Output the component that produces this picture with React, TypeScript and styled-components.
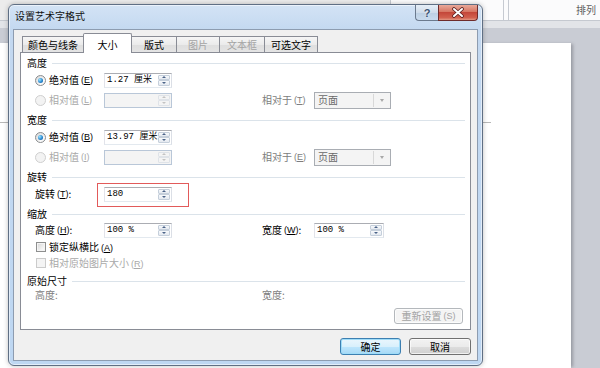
import React from "react";
import styled, { createGlobalStyle, css } from "styled-components";

const GlobalStyle = createGlobalStyle`
  html, body { margin: 0; padding: 0; }
  body {
    width: 600px; height: 368px; overflow: hidden;
    font-family: "Noto Sans CJK SC", "Liberation Sans", sans-serif;
    font-size: 10px; line-height: 14px; color: #000;
    background: #c9ccd4;
  }
  * { box-sizing: border-box; }
`;

const Screen = styled.div`
  position: relative;
  width: 600px;
  height: 368px;
  display: flex;
  flex-direction: column;
  overflow: hidden;
`;

const Ribbon = styled.div`
  height: 21px;
  flex: none;
  display: flex;
  background: #fbfbfc;
  border-bottom: 1px solid #c5c9d0;
`;

const RibbonGroup = styled.div<{ $w?: number; $tone?: string }>`
  ${(p) => (p.$w ? css`width: ${p.$w}px; flex: none;` : css`flex: 1;`)}
  background: ${(p) => p.$tone ?? "transparent"};
  border-right: 1px solid #c6cad1;
  display: flex;
  align-items: center;
  justify-content: flex-end;
  padding-right: 4px;
  color: #5f5f5f;
  &:last-child { border-right: none; }
`;

const Band = styled.div`
  height: 7px;
  flex: none;
  background: #e2e4e8;
`;

const Workspace = styled.div`
  flex: 1;
  padding-top: 15px;
  background: #c9ccd4;
  display: flex;
`;

const Page = styled.div`
  width: 571px;
  height: 100%;
  background: #fff;
  box-shadow: 3px 0 3px -1px rgba(60, 60, 70, 0.35);
`;

const MarginGuide = styled.div`
  margin-top: 79px;
  width: 491px;
  height: 1px;
  background: #b8b8b8;
`;

/* ---------- dialog window ---------- */

const Dialog = styled.div`
  position: absolute;
  left: 8px;
  top: 4px;
  width: 475px;
  height: 362px;
  border: 1px solid #5f6f84;
  border-radius: 6px;
  background: linear-gradient(#d3e3f5, #c3d8f0 26px, #bed7f2);
  box-shadow: inset 0 0 0 1px rgba(255, 255, 255, 0.55), 0 0 5px rgba(0, 0, 0, 0.25);
  padding: 0 4px 4px 4px;
  display: flex;
  flex-direction: column;
`;

const TitleBar = styled.div`
  height: 24px;
  flex: none;
  display: flex;
  align-items: flex-start;
  padding-left: 2px;
`;

const TitleText = styled.div`
  padding-top: 4px;
  color: #111;
`;

const CaptionButtons = styled.div`
  margin-left: auto;
  display: flex;
  height: 16px;
`;

const CaptionButton = styled.div<{ $kind: "help" | "close" }>`
  height: 16px;
  display: flex;
  align-items: center;
  justify-content: center;
  border: 1px solid #6b7a8e;
  border-top: none;
  ${(p) =>
    p.$kind === "help"
      ? css`
          width: 23px;
          border-right: none;
          border-radius: 0 0 0 4px;
          background: linear-gradient(#e6eef7, #cfdcea 50%, #bccfe3 51%, #c9dbee);
          color: #3b5472;
          font-family: "Liberation Sans", sans-serif;
          font-weight: bold;
          font-size: 11px;
          text-shadow: 0 0 2px #fff;
        `
      : css`
          width: 40px;
          border-color: #6e2b2b;
          border-radius: 0 0 4px 0;
          background: linear-gradient(#e9a99a, #d67663 45%, #c4473a 50%, #d2614f 85%, #e39a86);
        `}
`;

const Content = styled.div`
  flex: 1;
  display: flex;
  flex-direction: column;
  background: #f0f0f0;
  border: 1px solid #8d9cb0;
  padding: 3px 6px 0 6px;
`;

const TabStrip = styled.div`
  height: 20px;
  flex: none;
  display: flex;
  align-items: flex-end;
  padding-left: 2px;
  margin-bottom: -1px;
  position: relative;
  z-index: 1;
`;

const Tab = styled.div<{ $w: number; $active?: boolean; $disabled?: boolean }>`
  width: ${(p) => p.$w}px;
  margin-right: -1px;
  border: 1px solid #898c95;
  border-bottom: none;
  display: flex;
  justify-content: center;
  color: ${(p) => (p.$disabled ? "#a3a3a3" : "#000")};
  ${(p) =>
    p.$active
      ? css`
          height: 20px;
          padding-top: 4px;
          background: #fff;
          position: relative;
          z-index: 2;
          border-radius: 2px 2px 0 0;
        `
      : css`
          height: 16px;
          margin-bottom: 1px;
          padding-top: 1px;
          background: linear-gradient(#f6f6f6, #ebebeb 50%, #dedede 51%, #e4e4e4);
        `}
`;

const Panel = styled.div`
  height: 278px;
  flex: none;
  background: #fff;
  border: 1px solid #898c95;
  padding: 0 5px 0 6px;
  display: flex;
  flex-direction: column;
`;

const Section = styled.div`
  padding-top: 3px;
  display: flex;
  flex-direction: column;
`;

const SectionHead = styled.div`
  height: 14px;
  display: flex;
  align-items: center;
  gap: 5px;
  &::after {
    content: "";
    flex: 1;
    height: 1px;
    background: #dbe3ea;
  }
`;

const Row = styled.div<{ $h: number }>`
  height: ${(p) => p.$h}px;
  padding-left: 8px;
  display: grid;
  grid-template-columns: 69px 68px 90px 52px auto;
  align-items: center;
`;

const Cell = styled.div<{ $tone?: "normal" | "disabled" | "muted"; $col?: number }>`
  display: flex;
  align-items: center;
  white-space: nowrap;
  ${(p) => p.$col && css`grid-column: ${p.$col};`}
  color: ${(p) =>
    p.$tone === "disabled" ? "#a9a9a9" : p.$tone === "muted" ? "#7d7d7d" : "#000"};
`;

const CheckRow = styled.div`
  height: 16px;
  padding-left: 9px;
  display: flex;
  align-items: center;
`;

const CheckLabel = styled.span<{ $disabled?: boolean }>`
  color: ${(p) => (p.$disabled ? "#a9a9a9" : "#000")};
`;

const Accel = styled.span`
  margin-left: 2px;
  font-size: 9px;
  font-family: "Liberation Sans", sans-serif;
`;

const Radio = styled.span<{ $checked?: boolean; $disabled?: boolean }>`
  width: 11px;
  height: 11px;
  flex: none;
  margin-right: 3px;
  border-radius: 50%;
  border: 1px solid ${(p) => (p.$disabled ? "#cfcfcf" : "#8a8c8e")};
  background: ${(p) =>
    p.$disabled ? "#f3f3f3" : "linear-gradient(135deg, #d8d8d8, #f8f8f8 70%)"};
  display: flex;
  align-items: center;
  justify-content: center;
  &::after {
    content: "";
    display: ${(p) => (p.$checked ? "block" : "none")};
    width: 5px;
    height: 5px;
    border-radius: 50%;
    background: radial-gradient(circle at 35% 35%, #9fe6ff, #2a8ad2 55%, #0d4f93);
  }
`;

const Check = styled.span<{ $disabled?: boolean }>`
  width: 10px;
  height: 10px;
  flex: none;
  margin-right: 3px;
  border: 1px solid ${(p) => (p.$disabled ? "#cbcbcb" : "#8e8f8f")};
  background: ${(p) =>
    p.$disabled
      ? "#f4f4f4"
      : "linear-gradient(135deg, #d5d5d5, #f6f6f6 75%)"};
  box-shadow: inset 0 0 0 1px ${(p) => (p.$disabled ? "#f4f4f4" : "#f4f4f4")};
`;

const TextBox = styled.div<{ $w: number; $disabled?: boolean; $marked?: boolean }>`
  width: ${(p) => p.$w}px;
  height: 15px;
  display: flex;
  align-items: stretch;
  position: relative;
  border: 1px solid;
  border-color: ${(p) =>
    p.$disabled ? "#b9c7d8" : "#abadb3 #dbdfe6 #e3e9ef #e2e3ea"};
  background: ${(p) => (p.$disabled ? "#f4f4f4" : "#fff")};
  ${(p) =>
    p.$marked &&
    css`
      &::after {
        content: "";
        position: absolute;
        left: -8px;
        right: -18px;
        top: -5px;
        bottom: -6px;
        border: 1px solid #e25a5a;
      }
    `}
`;

const BoxValue = styled.span`
  flex: 1;
  padding-left: 2px;
  display: flex;
  align-items: center;
  font-family: "Liberation Mono", "Noto Sans CJK SC", monospace;
  font-size: 9px;
  white-space: pre;
`;

const Spinner = styled.span`
  width: 13px;
  display: flex;
  flex-direction: column;
  padding: 1px 1px 1px 0;
`;

const SpinHalf = styled.span<{ $dir: "up" | "down"; $disabled?: boolean }>`
  flex: 1;
  border: 1px solid ${(p) => (p.$disabled ? "#dfe3e8" : "#c5cfdb")};
  border-radius: 1px;
  background: ${(p) => (p.$disabled ? "#f4f4f4" : "linear-gradient(#f8fafc, #e4e9f0)")};
  display: flex;
  align-items: center;
  justify-content: center;
  &::after {
    content: "";
    border-left: 2.5px solid transparent;
    border-right: 2.5px solid transparent;
    ${(p) =>
      p.$dir === "up"
        ? css`border-bottom: 2.5px solid ${p.$disabled ? "#c3c3c3" : "#4b6388"};`
        : css`border-top: 2.5px solid ${p.$disabled ? "#c3c3c3" : "#4b6388"};`}
  }
`;

const Select = styled.div`
  width: 77px;
  height: 17px;
  display: flex;
  border: 1px solid #a9adb3;
  background: #f4f4f4;
  color: #6a6a6a;
`;

const SelectText = styled.span`
  flex: 1;
  padding-left: 3px;
  display: flex;
  align-items: center;
`;

const SelectArrow = styled.span`
  width: 16px;
  border-left: 1px solid #d8d8d8;
  margin: 1px;
  display: flex;
  align-items: center;
  justify-content: center;
  &::after {
    content: "";
    border-left: 2.5px solid transparent;
    border-right: 2.5px solid transparent;
    border-top: 3px solid #a8a8a8;
  }
`;

const ResetRow = styled.div`
  margin-top: 6px;
  padding-right: 2px;
  display: flex;
  justify-content: flex-end;
`;

const PushButton = styled.div<{ $w: number; $h?: number; $variant?: "default" | "disabled" }>`
  width: ${(p) => p.$w}px;
  height: ${(p) => p.$h ?? 17}px;
  border-radius: 3px;
  display: flex;
  align-items: center;
  justify-content: center;
  border: 1px solid #707070;
  background: linear-gradient(#f2f2f2, #ebebeb 50%, #dddddd 51%, #cfcfcf);
  box-shadow: inset 0 0 0 1px rgba(255, 255, 255, 0.7);
  ${(p) =>
    p.$variant === "default" &&
    css`
      border-color: #3c7fb1;
      box-shadow: inset 0 0 0 1px #9fdcf8;
      background: linear-gradient(#eaf6fd, #d9f0fc 50%, #bee6fd 51%, #a7d9f5);
    `}
  ${(p) =>
    p.$variant === "disabled" &&
    css`
      border-color: #b4b8bc;
      background: #f4f4f4;
      box-shadow: inset 0 0 0 1px #fcfcfc;
      color: #a3a3a3;
    `}
`;

const Footer = styled.div`
  margin-top: 8px;
  display: flex;
  justify-content: flex-end;
  gap: 8px;
`;

/* ---------- small composites ---------- */

function NumberBox({
  w = 68,
  value = "",
  disabled,
  marked,
}: {
  w?: number;
  value?: string;
  disabled?: boolean;
  marked?: boolean;
}) {
  return (
    <TextBox $w={w} $disabled={disabled} $marked={marked}>
      <BoxValue>{value}</BoxValue>
      <Spinner>
        <SpinHalf $dir="up" $disabled={disabled} />
        <SpinHalf $dir="down" $disabled={disabled} />
      </Spinner>
    </TextBox>
  );
}

function Key({ k }: { k: string }) {
  return (
    <Accel>
      (<u>{k}</u>)
    </Accel>
  );
}

const tabs = [
  { label: "颜色与线条", w: 62 },
  { label: "大小", w: 49, active: true },
  { label: "版式", w: 46 },
  { label: "图片", w: 44, disabled: true },
  { label: "文本框", w: 46, disabled: true },
  { label: "可选文字", w: 54 },
];

export default function App() {
  return (
    <Screen>
      <GlobalStyle />
      <Ribbon>
        <RibbonGroup $w={391} $tone="#ececec" />
        <RibbonGroup $w={113} />
        <RibbonGroup $w={4} />
        <RibbonGroup>排列</RibbonGroup>
      </Ribbon>
      <Band />
      <Workspace>
        <Page>
          <MarginGuide />
        </Page>
      </Workspace>

      <Dialog>
        <TitleBar>
          <TitleText>设置艺术字格式</TitleText>
          <CaptionButtons>
            <CaptionButton $kind="help">?</CaptionButton>
            <CaptionButton $kind="close">
              <svg width="14" height="11" viewBox="0 0 14 11">
                <path d="M3 2 L11 9 M11 2 L3 9" stroke="#5a1e1e" strokeWidth="3.6" strokeLinecap="round" />
                <path d="M3 2 L11 9 M11 2 L3 9" stroke="#ffffff" strokeWidth="2" strokeLinecap="round" />
              </svg>
            </CaptionButton>
          </CaptionButtons>
        </TitleBar>

        <Content>
          <TabStrip>
            {tabs.map((t) => (
              <Tab key={t.label} $w={t.w} $active={t.active} $disabled={t.disabled}>
                {t.label}
              </Tab>
            ))}
          </TabStrip>

          <Panel>
            <Section>
              <SectionHead>高度</SectionHead>
              <Row $h={20}>
                <Cell>
                  <Radio $checked />
                  绝对值
                  <Key k="E" />
                </Cell>
                <NumberBox value="1.27 厘米" />
              </Row>
              <Row $h={20}>
                <Cell $tone="disabled">
                  <Radio $disabled />
                  相对值
                  <Key k="L" />
                </Cell>
                <NumberBox disabled />
                <Cell $tone="muted" $col={4}>
                  相对于
                  <Key k="T" />
                </Cell>
                <Select>
                  <SelectText>页面</SelectText>
                  <SelectArrow />
                </Select>
              </Row>
            </Section>

            <Section>
              <SectionHead>宽度</SectionHead>
              <Row $h={20}>
                <Cell>
                  <Radio $checked />
                  绝对值
                  <Key k="B" />
                </Cell>
                <NumberBox value="13.97 厘米" />
              </Row>
              <Row $h={20}>
                <Cell $tone="disabled">
                  <Radio $disabled />
                  相对值
                  <Key k="I" />
                </Cell>
                <NumberBox disabled />
                <Cell $tone="muted" $col={4}>
                  相对于
                  <Key k="E" />
                </Cell>
                <Select>
                  <SelectText>页面</SelectText>
                  <SelectArrow />
                </Select>
              </Row>
            </Section>

            <Section>
              <SectionHead>旋转</SectionHead>
              <Row $h={20}>
                <Cell>
                  旋转
                  <Key k="T" />:
                </Cell>
                <NumberBox value="180" marked />
              </Row>
            </Section>

            <Section>
              <SectionHead>缩放</SectionHead>
              <Row $h={18}>
                <Cell>
                  高度
                  <Key k="H" />:
                </Cell>
                <NumberBox value="100 %" />
                <Cell $col={4}>
                  宽度
                  <Key k="W" />:
                </Cell>
                <NumberBox w={70} value="100 %" />
              </Row>
              <CheckRow>
                <Check />
                <CheckLabel>
                  锁定纵横比
                  <Key k="A" />
                </CheckLabel>
              </CheckRow>
              <CheckRow>
                <Check $disabled />
                <CheckLabel $disabled>
                  相对原始图片大小
                  <Key k="R" />
                </CheckLabel>
              </CheckRow>
            </Section>

            <Section>
              <SectionHead>原始尺寸</SectionHead>
              <Row $h={14}>
                <Cell $tone="muted">高度:</Cell>
                <Cell $tone="muted" $col={4}>
                  宽度:
                </Cell>
              </Row>
            </Section>

            <ResetRow>
              <PushButton $w={69} $h={16} $variant="disabled">
                重新设置
                <Accel>(S)</Accel>
              </PushButton>
            </ResetRow>
          </Panel>

          <Footer>
            <PushButton $w={61} $variant="default">
              确定
            </PushButton>
            <PushButton $w={62}>取消</PushButton>
          </Footer>
        </Content>
      </Dialog>
    </Screen>
  );
}
